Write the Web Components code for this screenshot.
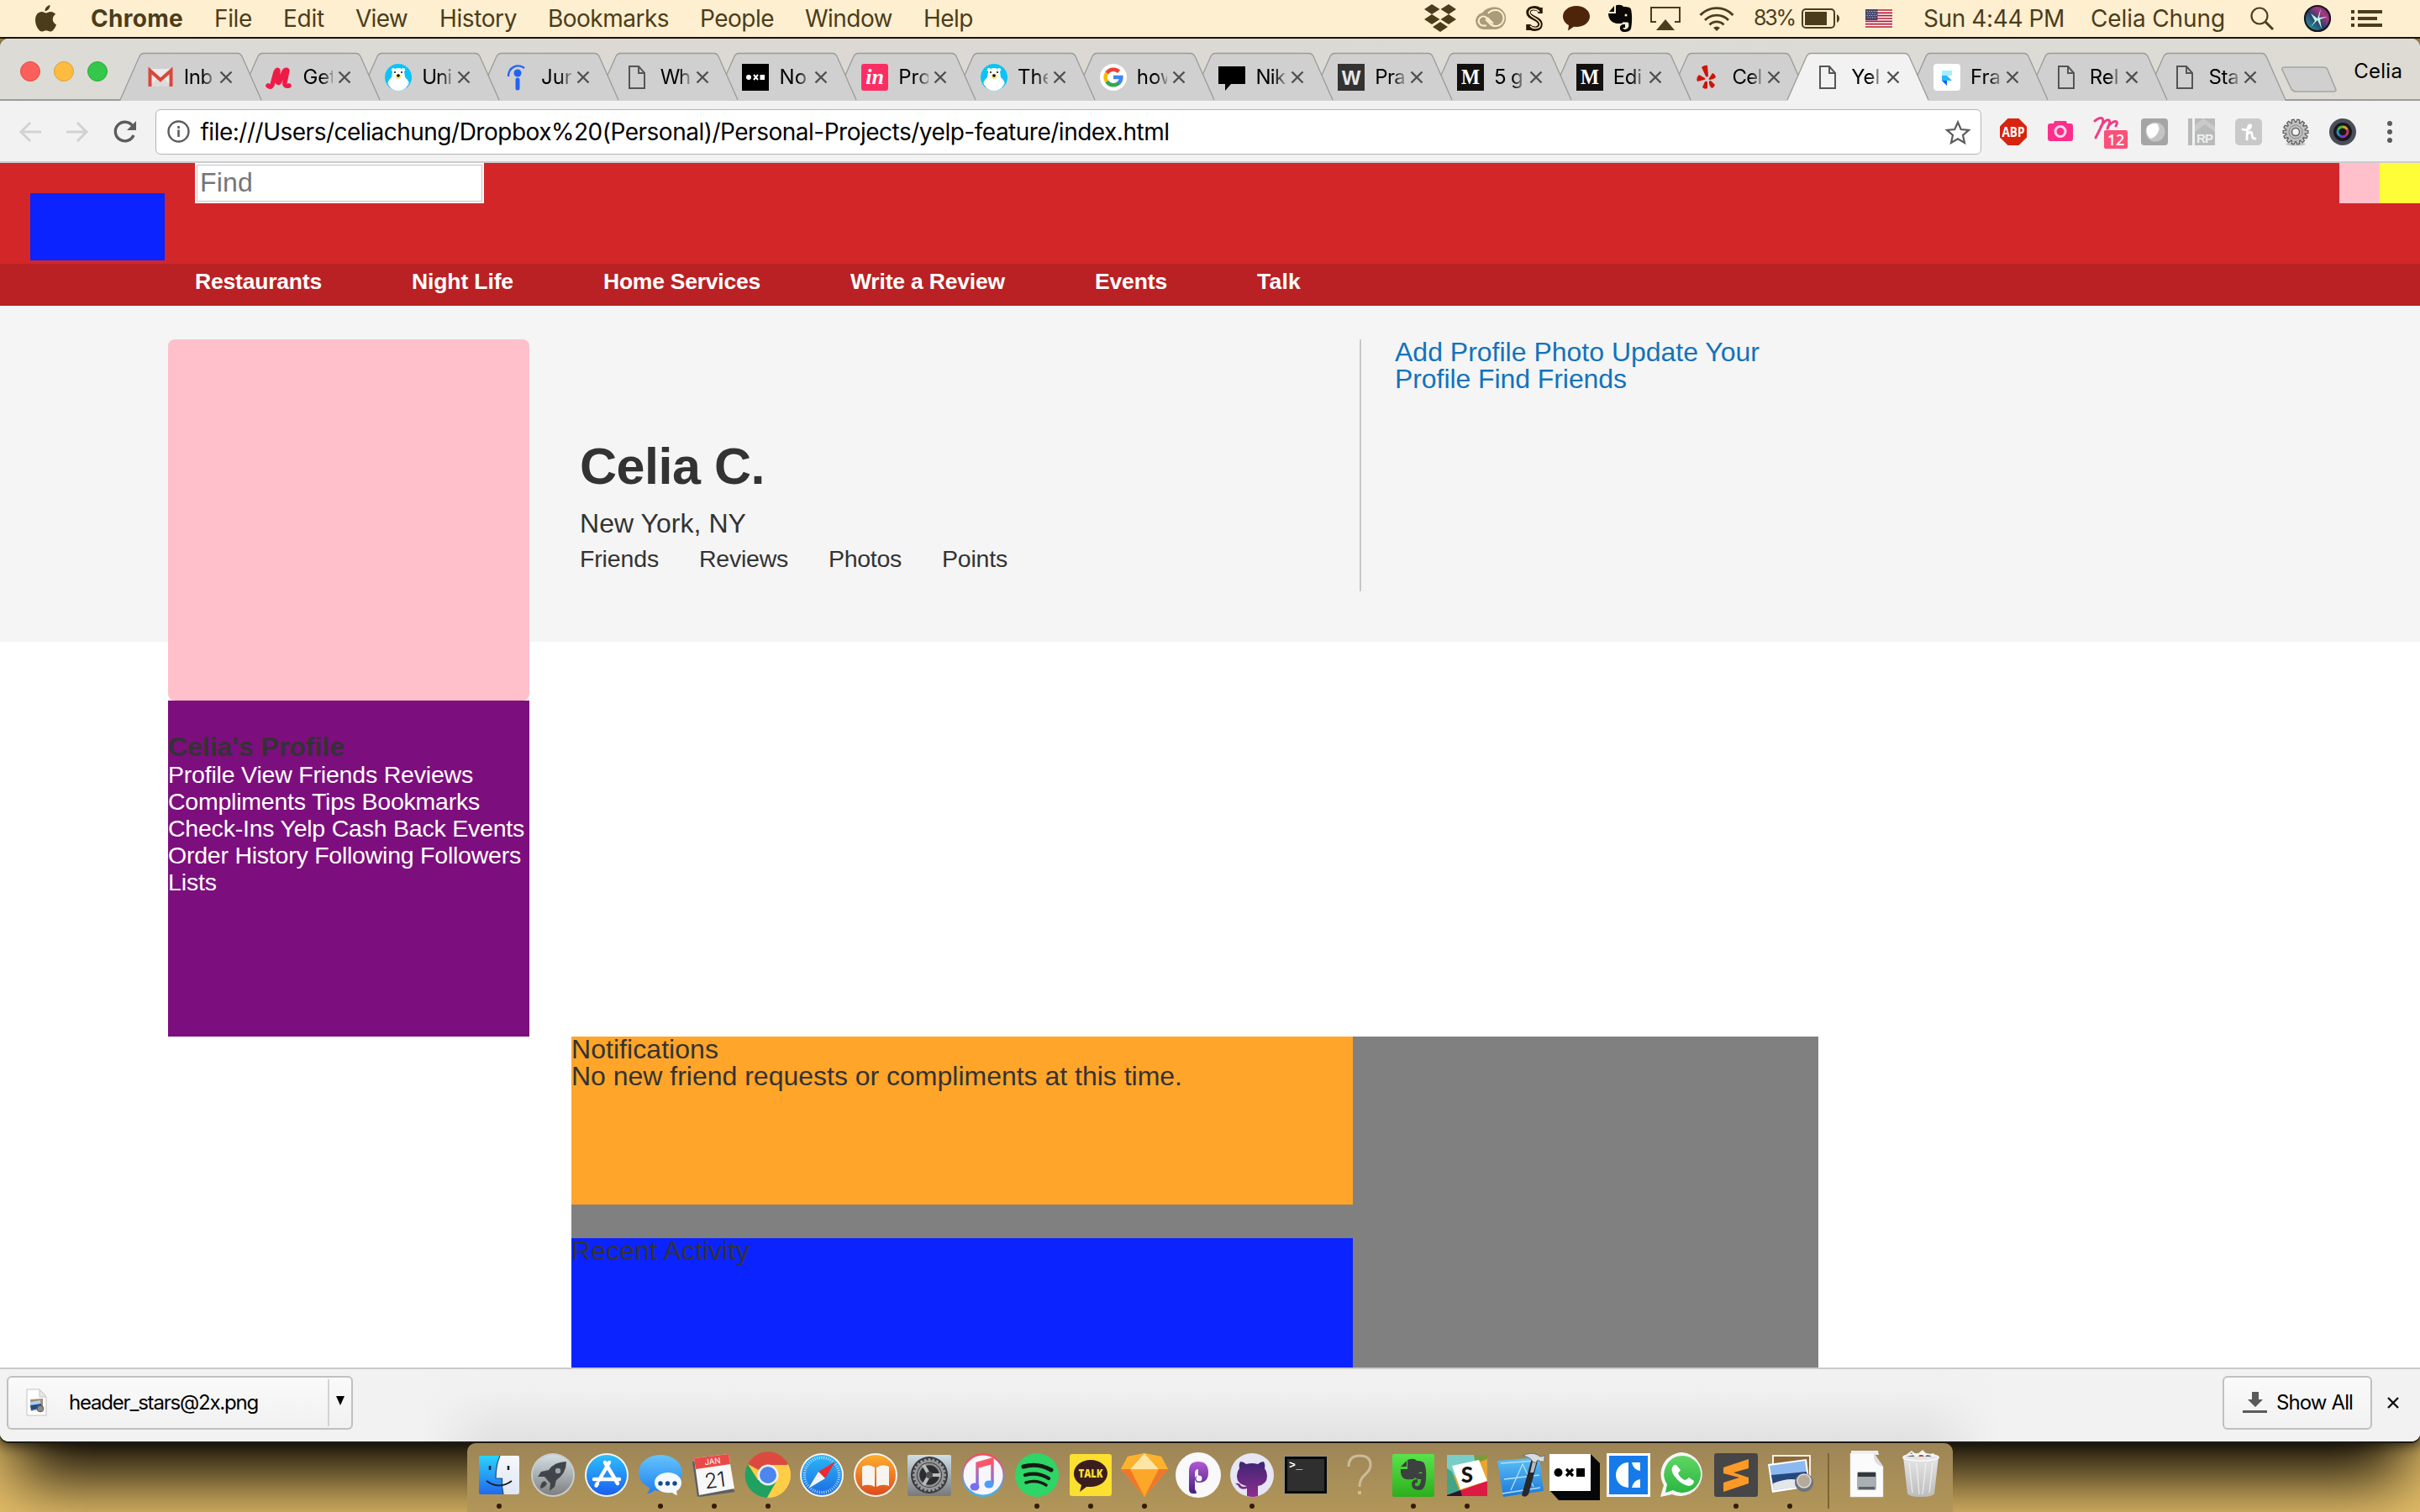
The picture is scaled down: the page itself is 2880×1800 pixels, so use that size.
<!DOCTYPE html>
<html lang="en">
<head>
<meta charset="utf-8">
<title>Yelp feature</title>
<style>
html,body{margin:0;padding:0;width:2880px;height:1800px;overflow:hidden;background:#e6c06a}
</style>
</head>
<body>
<desktop-screen>
  <mac-menubar></mac-menubar>
  <browser-window>
    <tab-strip slot="tabs"></tab-strip>
    <nav-toolbar slot="toolbar"></nav-toolbar>
    <yelp-page></yelp-page>
    <download-shelf slot="shelf"></download-shelf>
  </browser-window>
  <mac-dock></mac-dock>
</desktop-screen>
<script>
const define=(name,html,after)=>customElements.define(name,class extends HTMLElement{
  constructor(){super();this.attachShadow({mode:'open'});}
  connectedCallback(){
    if(this.done)return;this.done=true;
    this.shadowRoot.innerHTML=typeof html==='function'?html(this):html;
    if(after)after(this,this.shadowRoot);
  }
});

/* One line of text, tracked so that it fills the width given in w. */
define('fit-text',`<style>:host{display:block;white-space:pre;flex:none}span{display:inline-block;white-space:pre}</style><span><slot></slot></span>`,
(el,root)=>{
  const w=+el.getAttribute('w'),s=root.querySelector('span');
  if(!w)return;
  el.style.width=w+'px';
  const n=el.textContent.length,nat=s.getBoundingClientRect().width;
  if(n&&nat)s.style.letterSpacing=((w-nat)/n).toFixed(3)+'px';
});

/* Lays [start, end, markup] items out in a flex row with the gaps between them. */
const row=items=>{let prev=0;return items.map(([a,b,html])=>{
  const m=a-prev;prev=b;
  return `<div style="margin-left:${m}px;width:${b-a}px;flex:none;display:flex;align-items:center">${html}</div>`;}).join('');};
const t=(a,b,s,css='')=>[a-1,b+2,`<fit-text w="${b-a+2}" style="${css}">${s}</fit-text>`];
const svg=(w,h,vb,body)=>`<svg width="${w}" height="${h}" viewBox="${vb}" style="display:block;flex:none;overflow:visible">${body}</svg>`;

define('desktop-screen',`<style>:host{display:flex;flex-direction:column;width:2880px;height:1800px;background:#e6c06a;overflow:hidden}</style><slot></slot>`);

/* ---------- menu bar ---------- */
const C='#4b3d1b';
define('mac-menubar',()=>`<style>:host{display:flex;align-items:center;height:44px;flex:none;background:#feefd0;color:${C};font:28px/44px Inter,sans-serif;border-bottom:2px solid #17130a;box-sizing:content-box}</style>`+row([
[42,67,svg(25,32,'0 0 25 32',`<path fill="${C}" d="M17.5 0c.3 3.600-2.700 7.300-6 7.200C11.200 4 14 .6 17.500 0zM12.800 9.500c1.500 0 3-1.600 5.600-1.500 2.500.1 4.500 1.300 5.700 3-5 3.200-4.100 10.100.9 12.200-1.200 3.800-4 8.300-7 8.400-2 0-2.600-1.300-5-1.300s-3.200 1.300-5 1.300C4.300 31.600 0 24.200 0 18.200 0 11.600 3.700 8.100 7.600 8.100c2.200 0 3.800 1.400 5.200 1.400z"/>`)],
t(109,217,'Chrome','font-weight:700'),t(256,299,'File'),t(338,385,'Edit'),t(424,484,'View'),t(524,614,'History'),t(653,795,'Bookmarks'),t(834,920,'People'),t(959,1061,'Window'),t(1100,1157,'Help'),
[1695,1733,svg(38,34,'0 0 38 34',`<path fill="${C}" d="M9 0l9.500 6L9 12 0 6zM29 0l9 6-9 6-9.500-6zM9 12l9.500 6L9 24l-9-6zM29 12l9 6-9 6-9.500-6zM19 21l9 6-9 6-9-6z"/>`)],
[1755,1794,svg(39,28,'0 0 39 28',`<path d="M10 27a10 10 0 0 1-1-19.700C13 2 19 0 25 .5a13.300 13.300 0 0 1 0 26.500z" fill="#aa9c78"/><path d="M20 19l-6-6a5.500 5.500 0 1 0-4 9.500h4" fill="none" stroke="#feefd0" stroke-width="2"/><path d="M16 8q3-4 9-4a9.500 9.500 0 1 1-7 16l-5-5M22 20l-7-7" fill="none" stroke="#feefd0" stroke-width="2"/>`)],
[1815,1837,svg(22,30,'0 0 22 30',`<path d="M18 9V2M18 6C15 2 4 1 4 8c0 7 14 6 14 14 0 6-9 7-14 2M4 29v-7" fill="none" stroke="#2a1704" stroke-width="5.500"/><path d="M17 7C13 2 5 3 5 8c0 6 13 7 13 14 0 5-8 6-12 2" fill="none" stroke="#feefd0" stroke-width="1.500"/>`)],
[1860,1892,svg(32,30,'0 0 32 30',`<path fill="#4e240a" d="M16 0c9 0 16 5.500 16 12.500S25 25 16 25l-3-.2L6 29.500 7 23C3 21 0 17 0 12.500 0 5.500 7 0 16 0z"/>`)],
[1914,1942,svg(28,32,'0 0 28 32',`<path fill="#0a0804" d="M1 8h6V1L1 8zm8-7.500C12-1 17 0 18 2c3 0 8 0 9 3 1.500 6 1.500 17 0 23-1 4-6 4-9 4-5 0-6-9 0-9h2v4h-2c-1 1 0 2 2 2 4-1 5-3 4-8-2-1-4 0-6-1-1 2-3 2-8 2C2 21 0 14 0 10h9z"/><circle cx="21" cy="12" r="1.500" fill="#feefd0"/>`)],
[1964,2000,svg(36,28,'0 0 36 28',`<path d="M7 18H1V1h34v17h-6" fill="none" stroke="${C}" stroke-width="2"/><path d="M18 15l11 13H7z" fill="${C}"/>`)],
[2022,2064,svg(42,30,'0 0 42 30',`<g fill="none" stroke="${C}" stroke-width="2.800"><path d="M1.500 11a27 27 0 0 1 39 0M7 17a19.500 19.500 0 0 1 28 0M12.500 22.500a12 12 0 0 1 17 0"/></g><path d="M17 26q4-3 8 0l-4 4z" fill="${C}"/>`)],
t(2088,2135,'83%','font-size:25px;margin-top:-2px'),
[2144,2190,svg(46,24,'0 0 46 24',`<rect x="1" y="1" width="38" height="22" rx="4" fill="none" stroke="${C}" stroke-width="2"/><rect x="4" y="4" width="26" height="16" fill="${C}"/><path d="M42 7q3 1.500 3 5t-3 5z" fill="${C}"/>`)],
[2220,2252,svg(32,22,'0 0 32 22',`<path fill="#fff" d="M0 0h32v22H0z"/><path stroke="#b5182f" stroke-width="1.700" d="M0 1h32M0 4.400h32M0 7.700h32M0 11h32M0 14.400h32M0 17.700h32M0 21h32"/><path fill="#43436b" d="M0 0h14.500v13H0z"/><path stroke="#c9c9dd" stroke-dasharray="1.200 1.500" d="M1.500 2.500h12M2.500 5h11M1.500 7.500h12M2.500 10h11"/>`)],
t(2290,2456,'Sun 4:44 PM'),t(2489,2647,'Celia Chung'),
[2678,2706,svg(28,28,'0 0 28 28',`<circle cx="11" cy="11" r="9.500" fill="none" stroke="${C}" stroke-width="2.200"/><path d="M18 18l9 9" stroke="${C}" stroke-width="3"/>`)],
[2742,2774,svg(32,32,'0 0 32 32',`<defs><linearGradient id="s" x1="0" y1="1" x2="1" y2="0"><stop offset="0" stop-color="#22b8b0"/><stop offset=".45" stop-color="#2b3f68"/><stop offset=".7" stop-color="#a8387e"/><stop offset="1" stop-color="#4a2b6e"/></linearGradient></defs><circle cx="16" cy="16" r="15" fill="url(#s)" stroke="#171522" stroke-width="2.200"/><path d="M16 16L8 10l5 9-5 7 8-8 5 10-2-11 9-3-10 1 2-11z" fill="#c9fff7" opacity=".95"/>`)],
[2798,2835,svg(37,20,'0 0 37 20',`<path fill="${C}" d="M0 0h4v4H0zM8 0h29v4H8zM0 8h4v4H0zM8 8h23v4H8zM0 16h4v4H0zM8 16h29v4H8z"/>`)]
]));

/* ---------- browser window ---------- */
define('browser-window',`<style>:host{display:flex;flex-direction:column;height:1670px;flex:none;background:#fff;border-radius:10px;box-shadow:0 2px 0 0 #1c1b19,0 64px 74px -20px #0c0903,0 0 16px 4px rgba(12,9,3,.75);clip-path:inset(0 0 -84px 0)}
.page{flex:none;height:1434px;overflow:hidden}</style><slot name="tabs"></slot><slot name="toolbar"></slot><div class="page"><slot></slot></div><slot name="shelf"></slot>`);

const sq=(fill,rest)=>`<rect width="32" height="32" fill="${fill}"/>${rest}`;
const doc=`<g transform="translate(3 0)"><path d="M4 3h11l7 8v18H4zM15 3v8h7" fill="none" stroke="#555" stroke-width="2"/></g>`;
const bear=`<circle cx="16" cy="16" r="16" fill="#0cc3f7"/><path d="M8 6q2-2 4 0 4-2 8 0 2-2 4 0 1 2-1 3l1 7q7 6 3 10-4 6-11 6T5 26q-4-4 3-10l1-7Q7 8 8 6z" fill="#fff"/><ellipse cx="16" cy="15" rx="3.500" ry="3" fill="#f6e58a"/><circle cx="16" cy="14" r="1.800"/><circle cx="12" cy="10" r="1"/><circle cx="20" cy="10" r="1"/>`;
const med=sq('#12110f',`<text x="16" y="24" text-anchor="middle" font-family="Liberation Serif,serif" font-weight="700" font-size="25" fill="#fff" textLength="22" lengthAdjust="spacingAndGlyphs">M</text>`);
/* [title, favicon, width of the title when it fits whole] */
const tabs=[
['Inb',`<path d="M2 6h28v21H2z" fill="#eceaea"/><path d="M2 27l12-11 2 1 2-1 12 11z" fill="#dcdada"/><path d="M3.500 27V8L16 19 28.500 8v19" fill="none" stroke="#d9483b" stroke-width="4"/>`,34],
['Get',`<path d="M3 26q3 3 5-1l4-15q2-4 3-2l-1 13q1 3 3 0l5-12q3-3 4-1l-3 14q-1 5 5 4" fill="none" stroke="#ee1b46" stroke-width="5.500" stroke-linecap="round" stroke-linejoin="round"/>`],
['Uni',bear,35],
['Jun',`<circle cx="16" cy="11" r="4.500" fill="#2164f4"/><path d="M16 19v10" stroke="#2164f4" stroke-width="5" stroke-linecap="round"/><path d="M5 15C5 4 16-1 24 5" fill="none" stroke="#2164f4" stroke-width="2.300"/>`],
['Wh',doc,35],
['No',sq('#000',`<circle cx="8" cy="16" r="3" fill="#fff"/><path d="M14 13l5 6m0-6l-5 6" stroke="#fff" stroke-width="2"/><path d="M21.500 13H27v6h-5.500z" fill="#fff"/>`),33],
['Pro',`<rect width="32" height="32" rx="3" fill="#fb2e63"/><text x="16" y="24" text-anchor="middle" font-family="Liberation Serif,serif" font-weight="700" font-style="italic" font-size="26" fill="#fff">in</text>`],
['The',bear],
['how',`<circle cx="16" cy="16" r="16" fill="#fff"/><g fill="none" stroke-width="4.600"><path d="M8.200 11A9.300 9.300 0 0 1 22.500 9.300" stroke="#ea4335"/><path d="M8.200 21A9.300 9.300 0 0 1 8.200 11" stroke="#fbbc05"/><path d="M22.500 22.700A9.300 9.300 0 0 1 8.200 21" stroke="#34a853"/><path d="M16 16h9.300a9.300 9.300 0 0 1-3 7" stroke="#4285f4"/></g>`],
['Nik',`<path d="M0 3h32v21H15l-7 8v-8H0z"/>`,35],
['Pra',sq('#333',`<text x="16" y="25" text-anchor="middle" font-family="Liberation Sans,sans-serif" font-weight="700" font-size="24" fill="#e8e8e8">W</text>`),36],
['5 g',med,34],['Edi',med,34],
['Cel',`<g fill="#d01408"><path d="M8 4q4-3 7-2l1 12q-1 3-3 1z"/><path d="M5 13l7 4q1 2-1 2l-8 2q-2-4 2-8zM9 28l3-7q2-1 3 1v7q-3 2-6-1zM17 21q1-2 3 0l4 4q-1 3-4 4-4-4-3-8zM17 17l4-6q3 1 4 5-3 3-7 3-2 0-1-2z"/></g>`,35],
['Yel',doc,34],
['Fra',`<rect width="32" height="32" rx="4" fill="#fff"/><path d="M10 8h12v6H10z" fill="#a5ecff"/><path d="M10 14h6l6 6H10z" fill="#27b5fb"/><path d="M10 20h6v6z" fill="#0a62f5"/>`,36],
['Rel',doc,35],['Sta',doc,36]];
define('chrome-tab',el=>{const i=+el.getAttribute('n'),[title,ic,fit]=tabs[i],on=i===14;
return `<style>:host{display:grid;width:168px;height:57px;flex:none;margin-right:-26.25px;z-index:${on?50:30-i}}
svg.s{grid-area:1/1;overflow:visible;display:block}
.c{grid-area:1/1;display:flex;align-items:center;padding-left:32px;height:57px;box-sizing:border-box}
.n{margin-left:12px;width:36px;overflow:hidden;font:24px/57px Inter,sans-serif;color:#000;-webkit-mask-image:linear-gradient(90deg,#000 60%,rgba(0,0,0,.25));mask-image:linear-gradient(90deg,#000 60%,rgba(0,0,0,.25));white-space:nowrap}
.x{margin-left:7px}</style>
<svg class="s" width="168" height="57" viewBox="0 0 168 57"><path d="M0 57L23 4Q25 .5 28 .5H140Q143 .5 145 4L168 57z" fill="${on?'#f2f2f2':'#d0d0d0'}"/><path d="M0 56L23 4Q25 .5 28 .5H140Q143 .5 145 4L168 56" fill="none" stroke="#9b9a98" stroke-width="1.300"/></svg>
<div class="c">${svg(32,32,'0 0 32 32',ic)}<div class="n">${fit?`<fit-text w="${fit}">${title}</fit-text>`:title}</div><div class="x">${svg(14,14,'0 0 14 14','<path d="M.5.500l13 13M13.500.500l-13 13" stroke="#505050" stroke-width="2.400"/>')}</div></div>`});
define('tab-strip',()=>`<style>:host{display:flex;align-items:flex-end;height:74px;flex:none;background:linear-gradient(90deg,#dcdbd6,#dcd8d3 40%,#dbdad5 60%,#dddbd4);border-radius:10px 10px 0 0;box-shadow:inset 0 -2px #9c9b99}
.l{display:flex;gap:16px;align-self:center;padding-left:24px;width:118.700px;margin-top:3px}
.l i{width:24px;height:24px;border-radius:50%;box-sizing:border-box}
.t{display:flex;width:2551.500px;flex:none}.nt{align-self:flex-start;margin:32px 0 0 21px}.u{font:24px/30px Inter,sans-serif;margin-left:20px;align-self:flex-start;margin-top:24px}</style>
<div class="l"><i style="background:#fc605c;border:1px solid #e04b47"></i><i style="background:#fdbc40;border:1px solid #dfa034"></i><i style="background:#34c84a;border:1px solid #26ac38"></i></div>
<div class="t">${tabs.map((_,i)=>`<chrome-tab n="${i}"></chrome-tab>`).join('')}</div>
<div class="nt">${svg(66,33,'0 0 66 33','<path d="M4 2h46q4 0 5 3l10 24q0 2-3 2H18q-4 0-6-3L1 5q-1-3 3-3z" fill="#d0d0d0" stroke="#a5a5a3" stroke-width="1.600"/>')}</div><div class="u"><fit-text w="58">Celia</fit-text></div>`);

const gearTeeth=(n,r0,r1)=>{let d='';for(let k=0;k<n;k++){const a=k*2*Math.PI/n,w=Math.PI/n*.55,p=(r,b)=>(r*Math.cos(b)).toFixed(1)+' '+(r*Math.sin(b)).toFixed(1);d+=`${k?'L':'M'}${p(r0,a-w*1.5)}L${p(r1,a-w*.8)}L${p(r1,a+w*.8)}L${p(r0,a+w*1.500)}`}return d+'z'};
define('nav-toolbar',()=>`<style>:host{display:flex;align-items:center;height:74px;flex:none;background:#f2f2f2;box-shadow:inset 0 -2px #cdcbd0;padding-bottom:0}
.o{display:flex;align-items:center;width:2173px;height:54px;box-sizing:border-box;border:1.500px solid #b4b4b4;border-radius:6px;background:#fff;font:28px/52px Inter,sans-serif;color:#000;margin-top:-1px}</style>`+row([
[23,49,svg(26,24,'0 0 26 24','<path d="M26 12H2M13 1L2 12l11 11" fill="none" stroke="#d2d2d2" stroke-width="3"/>')],
[79,105,svg(26,24,'0 0 26 24','<path d="M0 12h24M13 1l11 11-11 11" fill="none" stroke="#d2d2d2" stroke-width="3"/>')],
[135,163,svg(28,27,'0 0 28 27','<path d="M22.500 5.500A11.300 11.300 0 1 0 24 17" fill="none" stroke="#5c5c5c" stroke-width="3.400"/><path d="M27 0v11H16z" fill="#5c5c5c"/>')],
[185,2358,`<div class="o">${row([
 [13,40,svg(27,27,'0 0 27 27','<circle cx="13.500" cy="13.500" r="12" fill="none" stroke="#5c5c5c" stroke-width="2.400"/><path d="M13.500 11.500v8.500M13.500 7v3" stroke="#5c5c5c" stroke-width="2.600"/>')],
 t(53.5,1204.5,'file:///Users/celiachung/Dropbox%20(Personal)/Personal-Projects/yelp-feature/index.html'),
 [2129,2159,svg(30,28,'0 0 30 28','<path d="M15 2.500l3.700 8.500 9.300.8-7 6.200 2 9-8-4.800L7 27l2-9-7-6.200 9.300-.8z" fill="none" stroke="#5c5c5c" stroke-width="2.200"/>')]])}</div>`],
[2380,2412,svg(32,32,'0 0 32 32','<path d="M9.500 0h13L32 9.500v13L22.500 32h-13L0 22.500v-13z" fill="#d8230f"/><text x="16" y="22" text-anchor="middle" font-family="Open Sans,sans-serif" font-weight="700" font-size="16.500" fill="#fff" textLength="27" lengthAdjust="spacingAndGlyphs">ABP</text>')],
[2437,2467,svg(30,26,'0 0 30 26','<path d="M3 3h4l1-3h14l1 3h4q3 0 3 3v15q0 3-3 3H3q-3 0-3-3V6q0-3 3-3z" fill="#fd2f8a"/><circle cx="15" cy="12.500" r="6" fill="none" stroke="#ffd9ea" stroke-width="3"/>')],
[2492,2532,svg(40,40,'0 0 40 40','<path d="M1 7q6-5 9-3 2 3-1 9T2 27M8 14q6-10 10-8 2 2-2 10M17 13q7-7 10-5 1 2-1 5" fill="none" stroke="#ef3d86" stroke-width="3" stroke-linecap="round"/><rect x="12" y="18" width="28" height="22" rx="2" fill="#fd4f78"/><text x="26" y="35.500" text-anchor="middle" font-family="Open Sans,sans-serif" font-weight="600" font-size="18" fill="#fff">12</text>')],
[2548,2580,svg(32,32,'0 0 32 32','<rect width="32" height="32" rx="4" fill="#a5a5a5"/><circle cx="17" cy="16" r="11.500" fill="#c4c4c4"/><path d="M7 10q7-6 13-3 4 7-3 14-4 4-7 2-5-6-3-13z" fill="#fff"/>')],
[2604,2636,svg(32,32,'0 0 32 32','<path d="M0 0h5v32H0zM8 0h24v32H8z" fill="#bababa"/><path d="M8 8L18 0l14 10v6L20 7 8 16z" fill="#cacaca"/><text x="20" y="29" text-anchor="middle" font-family="Liberation Sans,sans-serif" font-weight="700" font-size="15" fill="#efefef" textLength="20">RP</text>')],
[2660,2692,svg(32,32,'0 0 32 32','<rect width="32" height="32" rx="5" fill="#c9c9c9"/><path d="M9 13q6 2 9-2 2-4-1-3-3 2-3 17M14 19q5-5 6-1 0 7 4 6" fill="none" stroke="#fff" stroke-width="2.800" stroke-linecap="round"/>')],
[2716,2748,svg(32,32,'-16 -16 32 32',`<ellipse cx="0" cy="14.500" rx="12" ry="2" fill="#c4c4c4"/><path d="${gearTeeth(14,11.500,15)}" fill="#c0c0c0" stroke="#5c5c5c" stroke-width="1.200"/><circle r="8" fill="none" stroke="#8a8a8a"/><circle r="4.500" fill="#f4f4f4" stroke="#666" stroke-width="1.500"/>`)],
[2772,2804,svg(32,32,'0 0 32 32','<circle cx="16" cy="16" r="16" fill="#4a4e59"/><circle cx="16" cy="16" r="11" fill="#17181c"/><g fill="none" stroke-width="2.800"><path d="M16 10a6 6 0 0 1 5.500 3.500" stroke="#d99a30"/><path d="M21.500 13.500a6 6 0 0 1-2 7" stroke="#c83a58"/><path d="M19.500 20.500a6 6 0 0 1-7 0" stroke="#7d38c8"/><path d="M12.500 20.500a6 6 0 0 1-2-7" stroke="#2290b8"/><path d="M10.500 13.500a6 6 0 0 1 5.500-3.500" stroke="#4fb33d"/></g>')],
[2841,2847,svg(6,28,'0 0 6 28','<g fill="#5b5b5b"><circle cx="3" cy="4" r="3"/><circle cx="3" cy="14" r="3"/><circle cx="3" cy="24" r="3"/></g>')]
]));

/* ---------- the web page ---------- */
define('yelp-header',()=>`<style>:host{display:block;font-family:"Liberation Sans",sans-serif}
.top{height:120px;background:#d32629;display:flex}
.logo{width:160px;height:80px;background:#0a23ff;margin:36px 36px 0 36px}
.find{box-sizing:border-box;width:344px;height:48px;background:#fff;border:2px solid #fff;outline:1px solid #c4c4c4;outline-offset:-3px;color:#757575;font-size:32px;line-height:42px;padding-left:4px}
.r{margin-left:auto;display:flex}.r i{width:48px;height:48px;background:#ffc0cb}.r i+i{background:#fffd38}
nav{height:50px;background:#b92124;display:flex;color:#fff;font:700 26.500px/42px "Liberation Sans",sans-serif;align-items:flex-start}</style>
<div class="top"><div class="logo"></div><div class="find"><fit-text w="63">Find</fit-text></div><div class="r"><i></i><i></i></div></div>
<nav>${row([t(233,382,'Restaurants'),t(491,610,'Night Life'),t(719,904,'Home Services'),t(1013,1195,'Write a Review'),t(1304,1388,'Events'),t(1497,1547,'Talk')])}</nav>`);
define('profile-summary',`<style>:host{display:block;width:928px;color:#333;font-family:"Liberation Sans",sans-serif;box-sizing:border-box;padding:118px 0 0 60px}
.n{font-size:61px;line-height:66px;font-weight:700}.c{font-size:32px;line-height:40px;margin-top:15px}.s{display:flex;gap:48px;font-size:28.500px;line-height:32px;margin-top:6px}</style>
<fit-text class="n" w="220">Celia C.</fit-text><fit-text class="c" w="198">New York, NY</fit-text>
<div class="s"><fit-text w="94">Friends</fit-text><fit-text w="106">Reviews</fit-text><fit-text w="87">Photos</fit-text><fit-text w="78">Points</fit-text></div>`);
define('profile-links',`<style>:host{display:block;box-sizing:border-box;border-left:2px solid #c8c8c8;height:300px;padding-left:40px;color:#1173bc;font:32px/32px "Liberation Sans",sans-serif}</style><fit-text w="434" style="margin-top:-1px">Add Profile Photo Update Your</fit-text><fit-text w="276">Profile Find Friends</fit-text>`);
define('profile-sidebar',`<style>:host{display:block;width:430px;font-family:"Liberation Sans",sans-serif}
.p{height:430px;background:#ffc0cb;border-radius:8px}.w{background:#7d0e7e;height:400px;box-sizing:border-box;padding-top:38px}
.h{font:700 32px/34px "Liberation Sans",sans-serif;color:#333}.l{font-size:28.500px;line-height:32px;color:#fff}</style>
<div class="p"></div><div class="w"><fit-text class="h" w="210">Celia's Profile</fit-text>
<fit-text class="l" w="363">Profile View Friends Reviews</fit-text><fit-text class="l" w="371">Compliments Tips Bookmarks</fit-text><fit-text class="l" w="424">Check-Ins Yelp Cash Back Events</fit-text><fit-text class="l" w="420">Order History Following Followers</fit-text><fit-text class="l" w="58">Lists</fit-text></div>`);
define('activity-feed',`<style>:host{display:block;width:1484px;height:394px;background:#808080;color:#333;font:32px/32px "Liberation Sans",sans-serif}
.a,.b{width:930px;height:200px;background:#ffa52a;overflow:hidden}.b{background:#0a23ff;margin-top:40px;height:154px}</style>
<div class="a"><fit-text w="175" style="margin-top:-1px">Notifications</fit-text><fit-text w="727">No new friend requests or compliments at this time.</fit-text></div>
<div class="b"><fit-text w="212" style="margin-top:-1px">Recent Activity</fit-text></div>`);
define('yelp-page',`<style>:host{display:block;height:1434px;background:#fff}
.m{display:flex;height:870px;background:linear-gradient(#f5f5f5 400px,#fff 400px);padding:40px 0 0 200px;box-sizing:border-box}
activity-feed{margin-left:680px}</style><yelp-header></yelp-header><div class="m"><profile-sidebar></profile-sidebar><profile-summary></profile-summary><div style="width:60px;flex:none"></div><profile-links></profile-links></div><activity-feed></activity-feed>`);

/* ---------- download shelf ---------- */
define('download-shelf',`<style>:host{display:flex;align-items:flex-start;height:88px;flex:none;box-sizing:border-box;border-top:2px solid #cacaca;padding:8px 25px 0 8px;border-radius:0 0 10px 10px;font:24px/60px Inter,sans-serif;color:#000;
background:linear-gradient(90deg,#f2f2f2 500px,rgba(242,242,242,0) 590px,rgba(242,242,242,0) calc(100% - 590px),#f2f2f2 calc(100% - 500px)),linear-gradient(#f1f1f1,#f0f0f0 30%,#e1e1e1)}
.i,.s{display:flex;align-items:center;box-sizing:border-box;height:64px;border:2px solid #c0c0c0;border-radius:6px;background:linear-gradient(#fafafa,#f1f1f1)}
.i{width:412px;padding-left:21px}.s{width:178px;margin-left:auto;padding-left:22px}.v{width:2px;height:56px;background:#d3d3d3;margin:0 8px 0 83px}.x{margin:25px 0 0 18px}</style>
<div class="i">${svg(26,34,'0 0 26 34','<path d="M1 1h15l8 9v22H1z" fill="#fff" stroke="#c2c2c2"/><path d="M16 1v9h8z" fill="#e9e9e9" stroke="#c2c2c2"/><path d="M5 13l15-1v12L6 27z" fill="#a68b68"/><path d="M5 16l12-2 1 9-12 4z" fill="#a9d0f2"/><path d="M5 20l13-2v5L6 26z" fill="#274c80"/><circle cx="17" cy="24" r="3.800" fill="#8a8a8a" stroke="#555"/>')}<fit-text w="225" style="margin-left:25px">header_stars@2x.png</fit-text><div class="v"></div><div style="margin-top:-6px">${svg(10,11,'0 0 10 11','<path d="M0 0h10L5 11z"/>')}</div></div>
<div class="s">${svg(30,26,'0 0 30 26','<path d="M11 0h8v9h5l-9 9-9-9h5zM0 22h29v3H0z" fill="#5a5a5a"/>')}<fit-text w="91" style="margin-left:10px">Show All</fit-text></div>
<div class="x">${svg(14,14,'0 0 14 14','<path d="M1 1l12 12M13 1L1 13" stroke="#111" stroke-width="2.400"/>')}</div>`);

/* ---------- dock ---------- */
const g=(id,a,b,v=1)=>`<defs><linearGradient id="${id}" x1="0" y1="0" x2="${v?0:1}" y2="1"><stop offset="0" stop-color="${a}"/><stop offset="1" stop-color="${b}"/></linearGradient></defs>`;
const rnd=(a,b,ring='#f4f4f4')=>g('g',a,b)+`<circle r="26" fill="${ring}"/><circle r="24" fill="url(#g)"/>`;
const ticks=(n,a,b)=>{let d='';for(let k=0;k<n;k++){const q=k*2*Math.PI/n;d+=`M${(a*Math.cos(q)).toFixed(1)} ${(a*Math.sin(q)).toFixed(1)}L${(b*Math.cos(q)).toFixed(1)} ${(b*Math.sin(q)).toFixed(1)}`}return d};
const dock=[
[1,g('a','#2bd3fb','#2168ef')+g('b','#f7f8fb','#dfe7f3')+`<rect x="-24" y="-23" width="48" height="46" rx="2" fill="url(#a)"/><path d="M1-23H22q2 0 2 2V21q0 2-2 2H5Q3 14 3.500 4H-4Q-4-12 1-23z" fill="url(#b)"/><path d="M1-23Q-4-12-4 4H3.500Q3 14 5 23" fill="none" stroke="#1c4e86" stroke-width="1.200"/><path d="M-11-11v5M11-11v5" stroke="#111c2a" stroke-width="2.500"/><path d="M-15 7q15 11 30 0" fill="none" stroke="#111c2a" stroke-width="2"/>`],
[0,rnd('#d2dfe4','#7f7f7f','#c9cccd')+`<path d="M16-16Q2-16-5-6l-9 2-4 6 8 0 7 8-1 9 6-5 2-8Q16-2 16-16z" fill="#41454b"/><path d="M-10 7q-5 2-5 9 6-1 8-6z" fill="#41454b"/><circle cx="6" cy="-5" r="3.200" fill="#9ba5ab"/>`],
[0,rnd('#2cc0fb','#1c5ef0')+`<g stroke="#fff" stroke-width="4.500" stroke-linecap="round"><path d="M-9 6L3-15M-2-15L13 10M-15 5H15M-11 10l-1.500 2.500"/></g>`],
[1,g('a','#65c4fb','#1e7ff2')+`<path d="M0-24c14 0 26 9 26 21S14 19 0 19q-4 0-7-1-4 4-9 4 3-3 3-7C-21 11-26 5-26-3c0-12 12-21 26-21z" fill="url(#a)"/><path d="M9-3c9 0 16 5 16 12 0 4-2 8-6 10l1 5q-4-1-6-3C3 22-7 18-7 9-7 2 0-3 9-3z" fill="#f3f9fe"/><g fill="#154a8c"><circle cy="10" r="2.700"/><circle cx="8.500" cy="10" r="2.700"/><circle cx="17" cy="10" r="2.700"/></g>`],
[1,`<path d="M-26-16l4-1L-16 24l-4 2zM-20 23l42-7 3 4-42 6z" fill="#5b6063"/><path d="M-24-20L17-25l7 41-42 8z" fill="#f8f8f8"/><path d="M-24-20L17-25l2 12-41 6z" fill="#ea4a47"/><g transform="rotate(-7)" font-family="Inter,sans-serif" text-anchor="middle"><text x="0" y="-13" font-size="9.500" fill="#fff">JAN</text><text x="0" y="15" font-size="25" font-weight="300" fill="#222" textLength="25">21</text></g>`],
[1,`<circle r="27" fill="#ffcd46"/><path d="M0 0L-24-13A27 27 0 0 1 24-13z" fill="#dc4a3f"/><path d="M-24-13A27 27 0 0 0-1 27L11 6-12 6z" fill="#20a162"/><path d="M0-12H24A27 27 0 0 1-1 27L11 6z" fill="#ffcd46"/><circle r="12.500" fill="#f2f2f2"/><circle r="10" fill="#4c86ee"/>`],
[0,rnd('#2bb8f6','#1c6be2')+`<path d="${ticks(48,19,22.500)}" stroke="#c7e6fb" stroke-width="1"/><path d="M16-16L-4-4 4 4z" fill="#ee2a33"/><path d="M-16 16L-4-4 4 4z" fill="#f3f3f3"/>`],
[0,rnd('#fdae2c','#de4b1c')+`<path d="M-1-9Q-8-14-16-10V13Q-8 10-1 14zM1-9Q8-14 16-10V13Q8 10 1 14z" fill="#f8f4ef"/>`],
[0,g('a','#cfdee6','#787a7c')+`<rect x="-26" y="-24" width="52" height="49" rx="2" fill="url(#a)"/><circle r="22" fill="#393b3d"/><path d="${gearTeeth(24,17.500,20)}" fill="#949698"/><circle r="15" fill="#2b2d2f"/><circle r="13" fill="none" stroke="#8f9193" stroke-width="2.500"/><path d="M0 0H13M0 0L-7-12M0 0L-7 12" stroke="#b9bbbd" stroke-width="4"/><circle r="4" fill="#4b4d4f"/>`],
[0,g('a','#fb4a5c','#38b7f8')+g('b','#fb5c6c','#6a78f6')+`<circle r="26" fill="url(#a)"/><circle r="23.500" fill="#f7f6fa"/><path d="M-7 14V-14L11-19V10" fill="none" stroke="url(#b)" stroke-width="3.500"/><path d="M-7-14L11-19v6L-7-8z" fill="#fb5467"/><ellipse cx="-10" cy="14" rx="5.500" ry="4.500" fill="#7a6cf4"/><ellipse cx="7" cy="11" rx="5.500" ry="4.500" fill="#4a9df8"/>`],
[1,`<circle r="26" fill="#2fd566"/><g fill="none" stroke="#171b18" stroke-linecap="round"><path d="M-16-10q17-5 33 4" stroke-width="5"/><path d="M-14 0q15-4 28 4" stroke-width="4.300"/><path d="M-13 9q13-4 24 3" stroke-width="3.500"/></g>`],
[1,`<rect x="-25" y="-25" width="50" height="50" rx="3" fill="#fbe030"/><path d="M0-18c11 0 20 7 20 16S11 14 0 14l-5 0-8 6 2-8C-17 8-20 4-20-2c0-9 9-16 20-16z" fill="#3b1d1e"/><text x="0" y="3" text-anchor="middle" font-family="Open Sans,sans-serif" font-weight="800" font-size="14" fill="#fbe030" textLength="29" lengthAdjust="spacingAndGlyphs">TALK</text>`],
[1,`<path d="M0-26L20-22 28-7 0 26-28-7-20-22z" fill="#fda72a"/><path d="M-28-7h11L0 26zM28-7H17L0 26z" fill="#f0762a"/><path d="M0-26L17-7h-34z" fill="#fee5a6"/><path d="M-20-22L0-26-17-7h-11zM20-22L0-26 17-7h11z" fill="#fbb22d"/>`],
[0,g('a','#b358d6','#44207e')+`<circle r="27" fill="#f9f8fa"/><path d="M-6 22q-5 0-5-5V-5Q-11-16 0-16 12-16 12-3 12 9 1 9-4 9-4 4-4 1 0 1V-7q-4 0-4 5v19q2 2 2 5z" fill="url(#a)"/><circle cx="1" cy="4" r="3.500" fill="#f9f8fa"/>`],
[1,g('a','#3e2572','#8e2d90')+`<circle r="26" fill="#e6e6f5"/><path d="M-14-16q4 0 7 3 7-2 14 0 3-3 7-3 2 4 1 8 3 4 3 9 0 10-11 12 0 4 0 12-6 2-13 0v-9q-6 2-9-1-1-3-5-5 5-1 7 3 3 2 7 0Q-18 11-18 1q0-5 3-9-1-4 1-8z" fill="url(#a)"/>`],
[0,`<rect x="-26" y="-23" width="52" height="46" rx="2" fill="#8f9187"/><rect x="-25" y="-22" width="50" height="44" fill="#090909"/><rect x="-22" y="-19" width="44" height="38" fill="#2f2f30"/><text x="-20" y="-8" font-family="Liberation Mono,monospace" font-weight="700" font-size="13" fill="#fff" textLength="16">&gt;_</text>`],
[0,`<path d="M-13-10q0-13 13-13 13 0 13 11 0 6-7 12-6 5-6 14" fill="none" stroke="#cbbb9a" stroke-width="3"/><path d="M-2 19h4v4h-4z" fill="#cbbb9a"/>`],
[1,g('a','#58e44b','#2cae1d')+`<rect x="-25" y="-25" width="50" height="51" rx="2" fill="url(#a)"/><path d="M-15-10h7v-7l-7 7zm8-8q8-3 11 1 7 0 9 3 3 7 2 19-1 13-8 13-9 0-9-8 1-5 7-5v4q-4 0-3 3 1 2 4 1 3-2 3-8-5 0-7-2-2 3-5 2-13 2-12-12h8z" fill="#3c4140"/><path d="M6-2q3-3 5 0z" fill="#58d04b"/>`],
[1,`<rect x="-24" y="-24" width="48" height="49" rx="2" fill="#e9a52e"/><path d="M-24-24H10L14-8-18 2-24-8z" fill="#78cdc8"/><path d="M-24-8l6 4L-8 22l-16 2z" fill="#41a585"/><path d="M-24 24L24 7v18h-48z" fill="#dc1a44"/><path d="M-24 24l16-6 2 7h-18z" fill="#2c1433"/><path d="M8-24h16v5L10-14z" fill="#7d9b3a"/><path d="M-18-11L14-18 24 7-8 17z" fill="#fff"/><text x="0" y="9" text-anchor="middle" font-family="Lato,sans-serif" font-weight="900" font-size="26" fill="#151515">S</text>`],
[0,g('a','#5cc0f8','#1b78d8')+`<path d="M-28-17L22-21 27 19-21 26z" fill="url(#a)"/><path d="M-24-14L18-17M-20 5L22 0M-12 18L2-13 15 14M-22 22l45-7" stroke="#b3e0fb" stroke-width="1.300" fill="none"/><path d="M13-20l7 3L9 23q-4 5-8 1z" fill="#26282c"/><path d="M11-3L15-21h5L15-3z" fill="#b8bcc0"/><path d="M2-23q10-5 18-1 4 4 8 0v8q-5 1-8-2-2 5-6 2-2-5-12-7z" fill="#d9dcde" stroke="#6c7074"/>`],
[0,`<path d="M-29 19L-19 30H30V-14L19-25z" fill="#050708"/><path d="M-30-25h49v44h-49z" fill="#fff"/><circle cx="-19.500" cy="-3" r="5"/><path d="M-10-7l8 8m0-8l-8 8" stroke="#000" stroke-width="3.200"/><path d="M2-8h10V2H2z"/>`],
[0,`<path d="M-26-26h52v52h-52z" fill="#fff"/><path d="M-23-23h46v46h-46z" fill="#167ae9"/><path d="M0-15V15A15 15 0 0 1 0-15zM4-15H14V-5Q6-6 4-15zM4 15Q6 6 14 5V15z" fill="#fff"/>`],
[0,g('a','#60d663','#2bb741')+`<path d="M0-27A26 26 0 1 1-12 23L-26 26-22 12A26 26 0 0 1 0-27z" fill="#f6f6f6"/><path d="M0-23A22 22 0 1 1-11 18L-20 21-18 11A22 22 0 0 1 0-23z" fill="url(#a)"/><path d="M-7-12q-3-1-5 3-2 5 5 13t15 9q6-1 6-6l-6-4q-3 3-5 3-5-2-8-8l3-4z" fill="#fff"/>`],
[1,`<rect x="-26" y="-26" width="52" height="52" rx="3" fill="#464646"/><path d="M-15-9L15-19v11L-3-3l18 6V10L-15 20V9L4 3-15-2z" fill="#fd9a27"/>`],
[1,`<path d="M-20-23H24V6H-20z" fill="#8d6a3a" stroke="#f5f0e8" stroke-width="2"/><path d="M-26-13L20-19 24 14-21 21z" fill="#fff"/><path d="M-24-11L18-17 22 12-19 18z" fill="#8cb9f0"/><path d="M-22 0L20-4 22 6-20 12z" fill="#27477f"/><path d="M-20 10Q0 2 14 7l-1 6-32 5z" fill="#e4e7ea"/><circle cx="17" cy="9" r="11" fill="#70747a"/><circle cx="17" cy="7" r="8" fill="#b5aa9c" stroke="#dcdcdc" stroke-width="1.500"/>`]];
const extra=[
`<path d="M-19-29H13l1 5h-33z" fill="#eee"/><path d="M-20-26H8L19-10V26h-39z" fill="#fbfbfb" stroke="#ddd" stroke-width=".5"/><path d="M8-26Q7-12 19-10z" fill="#ddd"/><rect x="-12" y="-4" width="23" height="22" rx="2" fill="#a9b0b4"/><path d="M-11-3H10v5h-21z" fill="#33383b"/><path d="M-10 14H9v3h-19z" fill="#5a6063"/>`,
g('a','#e5e5e5','#bdbdbd')+`<path d="M-19-23l8-6 6 5 7-6 6 6 7-2 4 6z" fill="#f3f3f3"/><path d="M-16-21l5-6 4 6zM4-21l5-5 5 6z" fill="#4e6470"/><path d="M-3-22l3-4 4 4z" fill="#ad4f3a"/><path d="M-21-22H21L16 22Q14 26 0 26T-16 22z" fill="url(#a)"/><ellipse cy="-21" rx="21" ry="4" fill="none" stroke="#f5f5f5" stroke-width="2"/><path d="M-14-15l4 36M-5-14l3 37M6-14L2 23M14-15l-4 36" stroke="#f5f5f5" stroke-width="1.500" opacity=".7"/>`];
define('dock-icon',el=>{const k=el.getAttribute('k'),e=k[0]==='x';const [dot,body]=e?[0,extra[+k[1]]]:dock[+k];
return `<style>:host{display:block;width:64px;height:82px;flex:none}</style>`+svg(64,82,'-32 -38 64 82',body+(dot?'<circle cy="37" r="3" fill="#331b03"/>':''))});
define('mac-dock',()=>`<style>:host{display:flex;height:84px;flex:none;justify-content:flex-start;padding:2px 0 0 555.500px;box-sizing:border-box;z-index:2}
.d{display:flex;width:1768px;height:82px;box-sizing:border-box;padding-left:6px;border-radius:10px 10px 0 0;background:linear-gradient(#9d8557,#b29659);}
.v{width:2px;height:66px;background:#7d6433;margin:12px 13px 0 13px}</style><div class="d">${dock.map((_,i)=>`<dock-icon k="${i}"></dock-icon>`).join('')}<div class="v"></div><dock-icon k="x0"></dock-icon><dock-icon k="x1"></dock-icon></div>`);
</script>
</body>
</html>
